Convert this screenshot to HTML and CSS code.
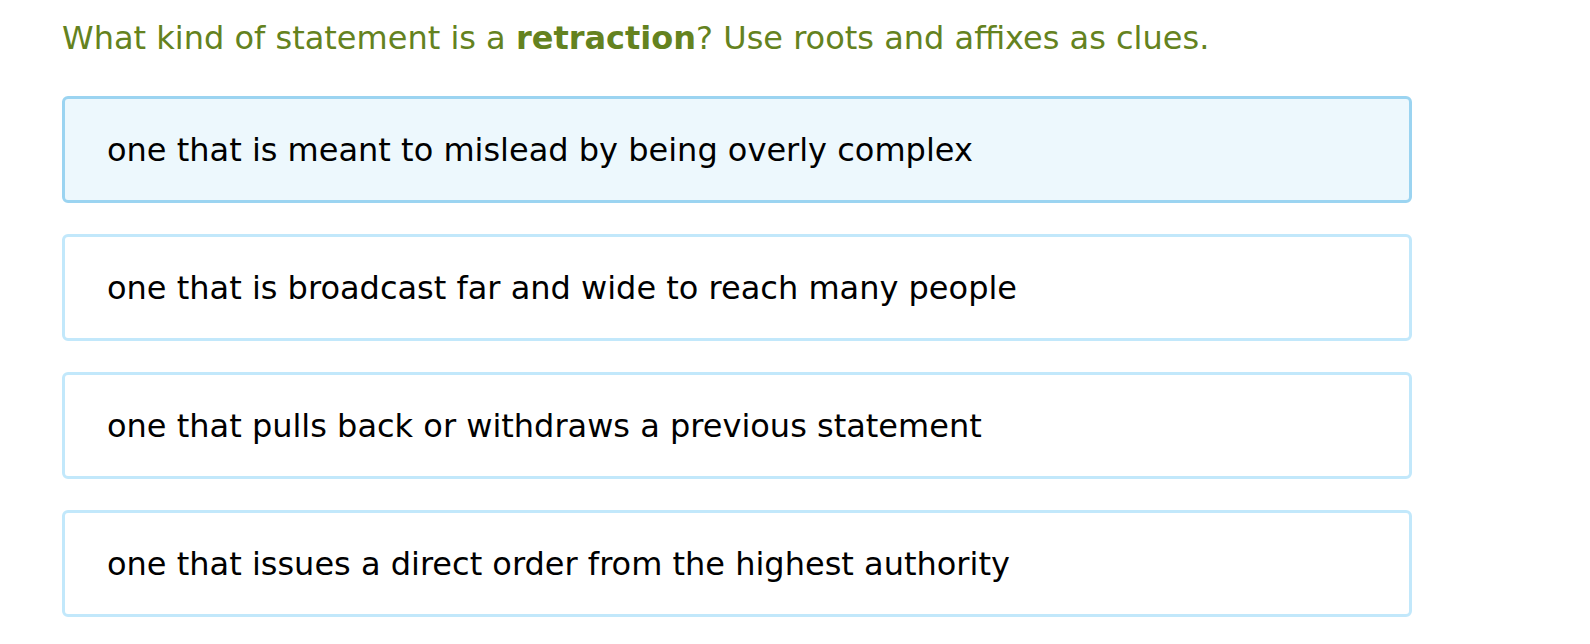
FILE: index.html
```html
<!DOCTYPE html>
<html>

<head>
    <title>Vocabulary Question</title>
    <link rel="stylesheet" href="styles.css">
</head>

<body>
    <div class="question">
        <p class="prompt">What kind of statement is a <strong>retraction</strong>? Use roots and affixes as clues.</p>
        <div class="choices">
            <div class="choice selected">one that is meant to mislead by being overly complex</div>
            <div class="choice">one that is broadcast far and wide to reach many people</div>
            <div class="choice">one that pulls back or withdraws a previous statement</div>
            <div class="choice">one that issues a direct order from the highest authority</div>
        </div>
    </div>
</body>

</html>
```

FILE: styles.css
```css
body {
    margin: 0;
    background-color: #ffffff;
    font-family: "DejaVu Sans", Verdana, sans-serif;
}

.question {
    padding: 18px 0 0 62px;
    width: 1350px;
}

.prompt {
    margin: 0 0 38px 0;
    color: #648220; /* olive green prompt text */
    font-size: 32px;
    line-height: 40px;
}

.prompt strong {
    font-weight: bold;
}

.choices {
    display: flex;
    flex-direction: column;
    gap: 31px;
}

.choice {
    box-sizing: border-box;
    height: 107px;
    padding: 0 0 0 42px;
    display: flex;
    align-items: center;
    border: 3px solid #c2e8fb;
    border-radius: 6px;
    color: #000000;
    font-size: 32px;
}

.choice.selected {
    background-color: #edf8fd;
    border-color: #9bd4f1;
}
```
